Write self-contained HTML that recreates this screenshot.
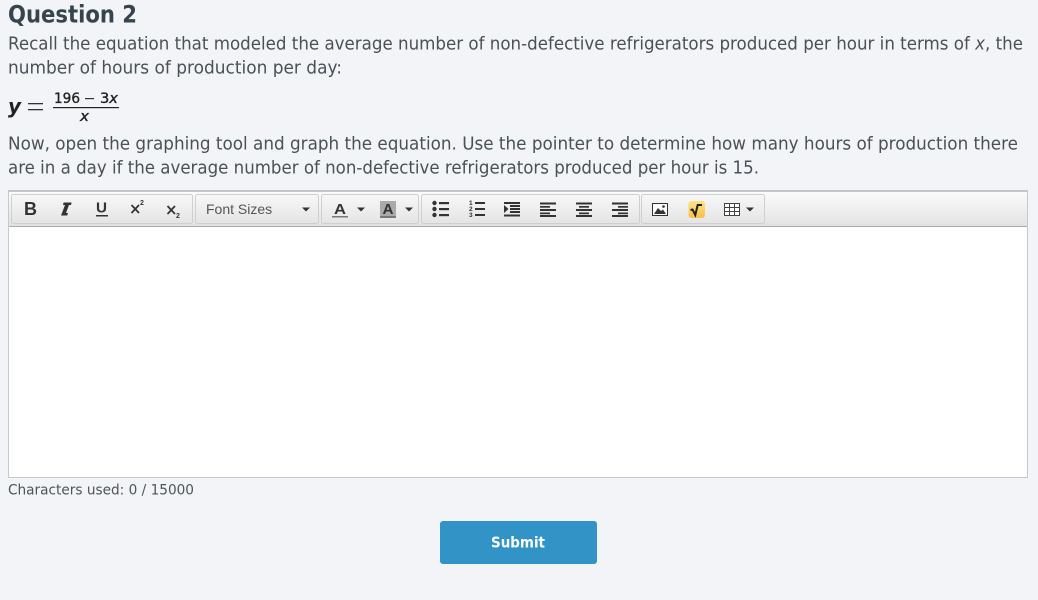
<!DOCTYPE html>
<html><head><meta charset="utf-8">
<style>
html,body{margin:0;padding:0;width:1038px;height:600px;overflow:hidden;background:#f2f4f7}
#s{position:absolute;left:0;top:0}
.t{font-family:"DejaVu Sans","Liberation Sans",sans-serif;font-size:17.8px;fill:#4a5156}
.sm{font-family:"DejaVu Sans","Liberation Sans",sans-serif;font-size:14.5px;fill:#4d5459}
.h{font-family:"DejaVu Sans","Liberation Sans",sans-serif;font-weight:bold;font-size:24px;fill:#37444e}
.m{font-family:"DejaVu Sans","Liberation Sans",sans-serif;font-size:14px;fill:#222;stroke:#222;stroke-width:.35}
.ic{font-family:"Liberation Sans",sans-serif;fill:#333}
</style></head><body>
<svg id="s" width="1038" height="600" viewBox="0 0 1038 600" xmlns="http://www.w3.org/2000/svg">
<defs>
<linearGradient id="tb" x1="0" y1="0" x2="0" y2="1"><stop offset="0" stop-color="#fcfcfc"/><stop offset="1" stop-color="#e2e2e2"/></linearGradient>
<linearGradient id="bt" x1="0" y1="0" x2="0" y2="1"><stop offset="0" stop-color="#f8f8f8"/><stop offset="1" stop-color="#e4e4e4"/></linearGradient>
<linearGradient id="ye" x1="0" y1="0" x2="0" y2="1"><stop offset="0" stop-color="#fde28a"/><stop offset="1" stop-color="#f9bf4a"/></linearGradient>
</defs>

<text class="h" x="8" y="22.500" textLength="129" lengthAdjust="spacingAndGlyphs">Question 2</text>
<text class="t" x="8" y="49.500" textLength="1015" lengthAdjust="spacingAndGlyphs">Recall the equation that modeled the average number of non-defective refrigerators produced per hour in terms of <tspan font-style="italic">x</tspan>, the</text>
<text class="t" x="8" y="73.500" textLength="334" lengthAdjust="spacingAndGlyphs">number of hours of production per day:</text>

<text x="8" y="113" font-family="'DejaVu Sans',sans-serif" font-style="italic" font-weight="bold" font-size="20" fill="#222" textLength="13" lengthAdjust="spacingAndGlyphs">y</text>
<rect x="28" y="103" width="15" height="1.300" fill="#333"/>
<rect x="28" y="109" width="15" height="1.300" fill="#333"/>
<text class="m" x="54" y="103" textLength="26" lengthAdjust="spacingAndGlyphs">196</text>
<rect x="85" y="98" width="9" height="1.200" fill="#333"/>
<text class="m" x="100" y="103" textLength="18" lengthAdjust="spacingAndGlyphs">3<tspan font-style="italic">x</tspan></text>
<rect x="53" y="107" width="66" height="1.200" fill="#222"/>
<text class="m" x="80" y="121" font-style="italic" textLength="9" lengthAdjust="spacingAndGlyphs">x</text>

<text class="t" x="8" y="149.500" textLength="1010" lengthAdjust="spacingAndGlyphs">Now, open the graphing tool and graph the equation. Use the pointer to determine how many hours of production there</text>
<text class="t" x="8" y="173.500" textLength="751" lengthAdjust="spacingAndGlyphs">are in a day if the average number of non-defective refrigerators produced per hour is 15.</text>

<!-- editor -->
<rect x="8.500" y="190.500" width="1019" height="287" fill="#fff" stroke="#c9c9c9"/>
<rect x="9" y="191" width="1018" height="36" fill="url(#tb)"/>
<rect x="8" y="190" width="1020" height="2" fill="#c6c6c6"/>
<rect x="9" y="226" width="1018" height="1" fill="#ababab"/>

<!-- button groups -->
<g fill="url(#bt)" stroke="#cfcfcf">
<rect x="11.500" y="194.500" width="181" height="29" rx="2"/>
<rect x="195.500" y="194.500" width="123" height="29" rx="2"/>
<rect x="321.500" y="194.500" width="97" height="29" rx="2"/>
<rect x="421.500" y="194.500" width="218" height="29" rx="2"/>
<rect x="641.500" y="194.500" width="123" height="29" rx="2"/>
</g>

<!-- B I U x2 x2 -->
<text class="ic" x="24" y="215" font-size="18" font-weight="bold">B</text>
<path d="M63 215h2.400M66.500 202.500h5M65 215l4-12.500" fill="none" stroke="#333" stroke-width="0"/>
<path d="M61 215.500l1-2.500 3-8h-2l.6-2.500h8l-.6 2.500h-2l-3 8h2l-.8 2.500z" fill="#333"/>
<text class="ic" x="96" y="212.500" font-size="14.500" font-weight="bold" textLength="11" lengthAdjust="spacingAndGlyphs">U</text>
<rect x="96" y="215" width="12" height="1.500" fill="#333"/>
<path d="M131.500 205l7.500 8M139 205l-7.500 8" stroke="#333" stroke-width="1.700" fill="none"/>
<text class="ic" x="140" y="205" font-size="7" font-weight="bold">2</text>
<path d="M167.500 206l7.500 8M175 206l-7.500 8" stroke="#333" stroke-width="1.700" fill="none"/>
<text class="ic" x="176" y="218" font-size="7" font-weight="bold">2</text>

<!-- Font sizes -->
<text x="206" y="214" font-family="'Liberation Sans',sans-serif" font-size="14" fill="#555">Font Sizes</text>
<path d="M302 207.500h8l-4 4z" fill="#333"/>

<!-- colors -->
<text class="ic" x="334" y="214" font-size="15" font-weight="bold" fill="#444" textLength="12" lengthAdjust="spacingAndGlyphs">A</text>
<rect x="332" y="216" width="16" height="1.500" fill="#777"/>
<path d="M357 207.500h8l-4 4z" fill="#333"/>
<rect x="380" y="201" width="16" height="17" fill="#aaa"/>
<rect x="380" y="216" width="16" height="2" fill="#777"/>
<text class="ic" x="382.500" y="214" font-size="15" font-weight="bold" textLength="11" lengthAdjust="spacingAndGlyphs">A</text>
<path d="M405 207.500h8l-4 4z" fill="#333"/>

<g fill="#333">
<!-- bullet list -->
<circle cx="434.500" cy="203" r="2.200"/><circle cx="434.500" cy="209" r="2.200"/><circle cx="434.500" cy="215" r="2.200"/>
<rect x="439" y="202" width="10" height="2.200"/><rect x="439" y="208" width="10" height="2.200"/><rect x="439" y="214" width="10" height="2.200"/>
<!-- numbered -->
<text x="469" y="205" font-family="'Liberation Sans',sans-serif" font-size="6.500" font-weight="bold">1</text>
<text x="469" y="211" font-family="'Liberation Sans',sans-serif" font-size="6.500" font-weight="bold">2</text>
<text x="469" y="217" font-family="'Liberation Sans',sans-serif" font-size="6.500" font-weight="bold">3</text>
<rect x="475" y="202" width="10" height="2"/><rect x="475" y="208" width="10" height="2"/><rect x="475" y="214" width="10" height="2"/>
<!-- indent -->
<rect x="504" y="202" width="16" height="2"/><rect x="510" y="205" width="10" height="2"/><rect x="510" y="208" width="10" height="2"/><rect x="510" y="211" width="10" height="2"/><rect x="504" y="214.500" width="16" height="2"/>
<path d="M504 205l4.500 4-4.500 4z"/>
<!-- left -->
<rect x="540" y="202.500" width="16" height="2"/><rect x="540" y="206" width="10" height="1.700"/><rect x="540" y="209" width="16" height="2"/><rect x="540" y="212.500" width="10" height="1.700"/><rect x="540" y="215" width="16" height="2"/>
<!-- center -->
<rect x="576" y="202.500" width="16" height="2"/><rect x="579" y="206" width="10" height="1.700"/><rect x="576" y="209" width="16" height="2"/><rect x="579" y="212.500" width="10" height="1.700"/><rect x="576" y="215" width="16" height="2"/>
<!-- right -->
<rect x="612" y="202.500" width="16" height="2"/><rect x="618" y="206" width="10" height="1.700"/><rect x="612" y="209" width="16" height="2"/><rect x="618" y="212.500" width="10" height="1.700"/><rect x="612" y="215" width="16" height="2"/>
</g>

<!-- image -->
<rect x="652.500" y="203.500" width="15" height="12" fill="#fff" stroke="#333"/>
<path d="M654 214l4-6 3 3 2-1.500 3 4.500z" fill="#333"/>
<circle cx="663.500" cy="206.500" r="1.300" fill="#333"/>

<!-- sqrt -->
<rect x="688.500" y="201" width="16.500" height="17" rx="3" fill="url(#ye)"/>
<path d="M690.500 210l2-.5 2.800 5.500 2.400-10h4.300" fill="none" stroke="#222" stroke-width="2"/>

<!-- table -->
<rect x="724.500" y="203.500" width="15" height="12" fill="#fff" stroke="#444"/>
<path d="M729.500 203.500v12M734.500 203.500v12M724.500 207.500h15M724.500 211.500h15" stroke="#444" fill="none"/>
<path d="M746 207.500h8l-4 4z" fill="#333"/>

<text class="sm" x="8" y="494.500" textLength="186" lengthAdjust="spacingAndGlyphs">Characters used: 0 / 15000</text>

<!-- submit -->
<rect x="440" y="521" width="157" height="43" rx="3" fill="#3193c6"/>
<text x="491" y="547.500" font-family="'DejaVu Sans',sans-serif" font-weight="bold" font-size="15" fill="#fff" textLength="54" lengthAdjust="spacingAndGlyphs">Submit</text>
</svg>
</body></html>
